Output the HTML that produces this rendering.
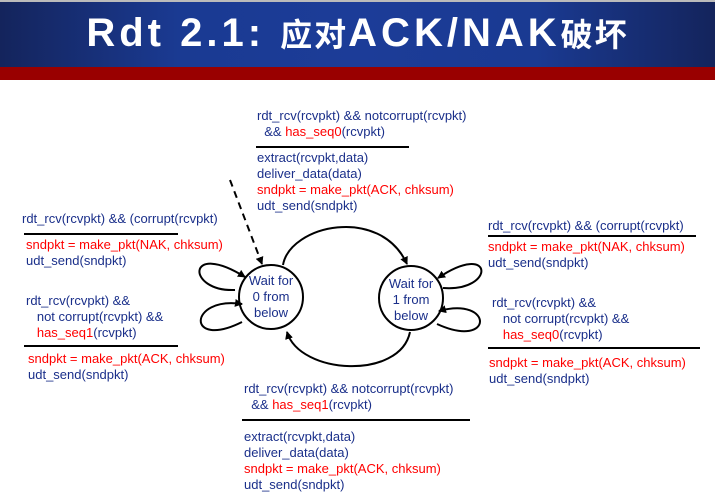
<!DOCTYPE html>
<html><head><style>
body{margin:0;width:715px;height:503px;position:relative;background:#fff;font-family:"Liberation Sans",Arial,sans-serif;overflow:hidden}
.hd{position:absolute;left:0;top:0;width:715px;height:67px;background:linear-gradient(90deg,#14245c 0%,#1a3a92 25%,#1c3c98 50%,#1a3a92 75%,#14245c 100%);border-top:2px solid #bbb;box-sizing:border-box}
.rb{position:absolute;left:0;top:67px;width:715px;height:13px;background:#990000}
.title{position:absolute;left:0;top:10px;width:715px;text-align:center;color:#fff;font-weight:bold;font-size:40px;font-family:"Liberation Sans","Noto Sans CJK SC",sans-serif;letter-spacing:4px}
.title .c{font-size:32px;letter-spacing:2px}
.t{position:absolute;font-size:13px;line-height:16px;color:#1a2f8a;white-space:pre}
.r{color:#ff0000}
.l{position:absolute;height:2px;background:#000}
.st{position:absolute;font-size:13px;line-height:16px;color:#1a2f8a;text-align:center;width:70px;white-space:pre}
</style></head><body>
<div class="hd"></div><div class="rb"></div>
<div class="title">Rdt 2.1: <span class="c">应对</span>ACK/NAK<span class="c">破坏</span></div>

<div class="t" style="left:257px;top:108px">rdt_rcv(rcvpkt) &amp;&amp; notcorrupt(rcvpkt)
  &amp;&amp; <span class="r">has_seq0</span>(rcvpkt)</div>
<div class="l" style="left:256px;top:146px;width:153px"></div>
<div class="t" style="left:257px;top:150px">extract(rcvpkt,data)
deliver_data(data)
<span class="r">sndpkt = make_pkt(ACK, chksum)</span>
udt_send(sndpkt)</div>

<div class="t" style="left:22px;top:211px">rdt_rcv(rcvpkt) &amp;&amp; (corrupt(rcvpkt)</div>
<div class="l" style="left:24px;top:233px;width:154px"></div>
<div class="t" style="left:26px;top:237px"><span class="r">sndpkt = make_pkt(NAK, chksum)</span>
udt_send(sndpkt)</div>

<div class="t" style="left:26px;top:293px">rdt_rcv(rcvpkt) &amp;&amp;
   not corrupt(rcvpkt) &amp;&amp;
   <span class="r">has_seq1</span>(rcvpkt)</div>
<div class="l" style="left:24px;top:345px;width:154px"></div>
<div class="t" style="left:28px;top:351px"><span class="r">sndpkt = make_pkt(ACK, chksum)</span>
udt_send(sndpkt)</div>

<div class="t" style="left:488px;top:218px">rdt_rcv(rcvpkt) &amp;&amp; (corrupt(rcvpkt)</div>
<div class="l" style="left:488px;top:235px;width:208px"></div>
<div class="t" style="left:488px;top:239px"><span class="r">sndpkt = make_pkt(NAK, chksum)</span>
udt_send(sndpkt)</div>

<div class="t" style="left:492px;top:295px">rdt_rcv(rcvpkt) &amp;&amp;
   not corrupt(rcvpkt) &amp;&amp;
   <span class="r">has_seq0</span>(rcvpkt)</div>
<div class="l" style="left:488px;top:347px;width:212px"></div>
<div class="t" style="left:489px;top:355px"><span class="r">sndpkt = make_pkt(ACK, chksum)</span>
udt_send(sndpkt)</div>

<div class="t" style="left:244px;top:381px">rdt_rcv(rcvpkt) &amp;&amp; notcorrupt(rcvpkt)
  &amp;&amp; <span class="r">has_seq1</span>(rcvpkt)</div>
<div class="l" style="left:242px;top:419px;width:228px"></div>
<div class="t" style="left:244px;top:429px">extract(rcvpkt,data)
deliver_data(data)
<span class="r">sndpkt = make_pkt(ACK, chksum)</span>
udt_send(sndpkt)</div>

<svg style="position:absolute;left:0;top:0" width="715" height="503">
<defs><marker id="a" markerWidth="8" markerHeight="8" refX="7" refY="4" orient="auto" markerUnits="userSpaceOnUse"><path d="M0,0 L8,4 L0,8 z" fill="#000"/></marker></defs>
<g fill="none" stroke="#000" stroke-width="2">
<circle cx="271" cy="297" r="32"/>
<circle cx="411" cy="298" r="32"/>
<path d="M230,180 L262,264" stroke-dasharray="7,5" marker-end="url(#a)"/>
<path d="M283,265 C290,225 380,205 407,264" marker-end="url(#a)"/>
<path d="M410,332 C400,380 300,375 287,332" marker-end="url(#a)"/>
<path d="M235,290 C186,292 186,240 245,277" marker-end="url(#a)"/>
<path d="M242,322 C186,350 188,296 242,304" marker-end="url(#a)"/>
<path d="M443,288 C496,292 494,240 438,278" marker-end="url(#a)"/>
<path d="M437,324 C494,350 494,296 439,311" marker-end="url(#a)"/>
</g></svg>
<div class="st" style="left:236px;top:273px">Wait for
0 from
below</div>
<div class="st" style="left:376px;top:276px">Wait for
1 from
below</div>
</body></html>
